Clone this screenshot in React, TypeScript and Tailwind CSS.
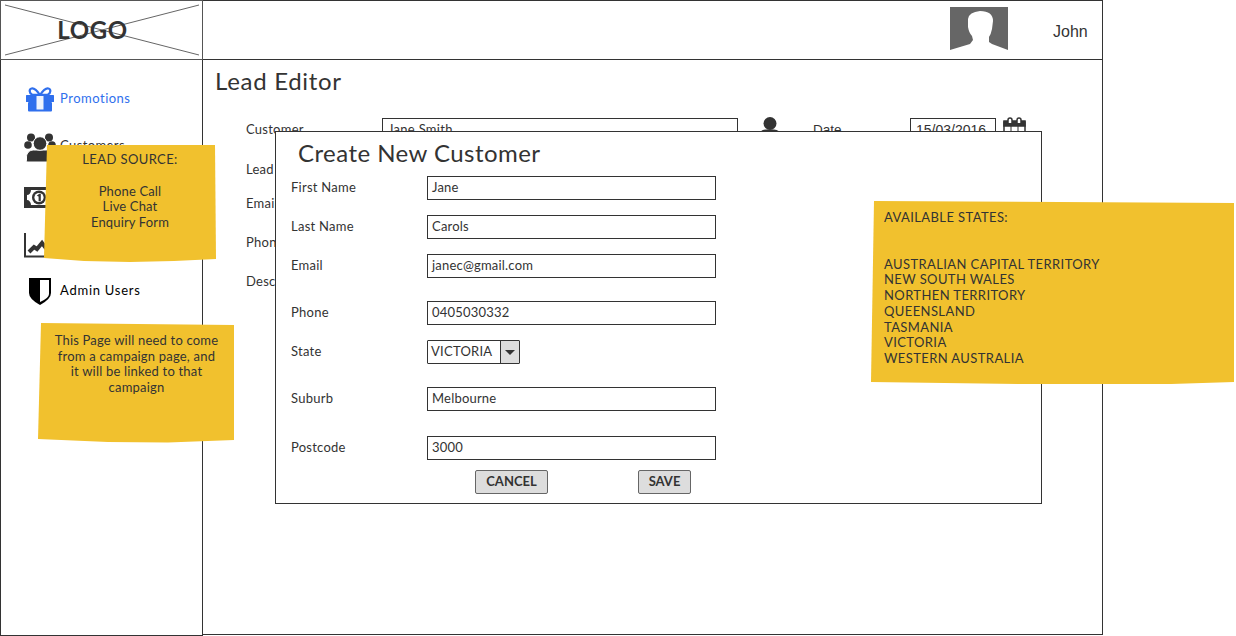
import type { ReactNode } from "react";

const font = "font-['Lato','Noto_Sans',sans-serif]";

function GiftIcon() {
  return (
    <svg width="28" height="25" viewBox="0 0 28 25" className="block">
      <path d="M14 8C10 2 7 1 5.500 1.500 3 2 3 6 6 7.500L14 8C18 2 21 1 22.500 1.500 25 2 25 6 22 7.500L14 8" fill="none" stroke="#2f6fed" strokeWidth="2.200" />
      <rect x="0" y="8" width="28" height="7" rx="0.500" fill="#2f6fed" />
      <rect x="2" y="15" width="24" height="9.500" rx="1" fill="#2f6fed" />
      <rect x="10.500" y="9" width="7" height="13.500" fill="#eef3fd" />
    </svg>
  );
}

function UsersIcon() {
  return (
    <svg width="32" height="30" viewBox="0 0 32 30" className="block" fill="#333333">
      <circle cx="7" cy="4.500" r="4" />
      <circle cx="25" cy="4.500" r="4" />
      <circle cx="4" cy="12" r="3.800" />
      <circle cx="28" cy="12" r="3.800" />
      <path d="M4 29c-1 0-1.500-.5-1.500-1.500V24c0-4 3-7 7-7h13c4 0 7 3 7 7v3.500c0 1-.5 1.500-1.500 1.500z" stroke="#ffffff" strokeWidth="1" />
      <circle cx="16" cy="10.500" r="6.800" stroke="#ffffff" strokeWidth="1" />
    </svg>
  );
}

function MoneyIcon() {
  return (
    <svg width="30" height="21" viewBox="0 0 30 21" className="block">
      <rect x="0" y="0" width="30" height="21" fill="#333333" />
      <path d="M7 3H27V18H7C7 15 5 13 3 13V8C5 8 7 6 7 3z" fill="#ffffff" />
      <circle cx="15" cy="10.500" r="7" fill="#333333" />
      <circle cx="15" cy="10.500" r="4.600" fill="#ffffff" />
      <path d="M12.800 8.800L15.300 6.800H16.800V14.200H14.600V9.500z" fill="#333333" />
    </svg>
  );
}

function ChartIcon() {
  return (
    <svg width="30" height="25" viewBox="0 0 30 25" className="block">
      <path d="M1 0V23.500H30" fill="none" stroke="#333333" strokeWidth="2" />
      <path d="M5 19L10 14 13 16 18 10 21 14 26 10" fill="none" stroke="#333333" strokeWidth="4" />
    </svg>
  );
}

function ShieldIcon() {
  return (
    <svg width="24" height="29" viewBox="0 0 24 29" className="block">
      <path d="M1 1H23V16Q23 22 12 28 1 22 1 16z" fill="#000000" />
      <path d="M12 3H21V17Q21 21 12 25z" fill="#ffffff" />
    </svg>
  );
}

function NavItem({ icon, label, className, iconClass }: { icon: ReactNode; label: string; className: string; iconClass: string }) {
  return (
    <div className={`flex h-[30px] items-center ${className}`}>
      <div className={`flex w-[59px] shrink-0 ${iconClass}`}>{icon}</div>
      <span className="text-[13px] leading-none">{label}</span>
    </div>
  );
}

function Field({ label, value, mt }: { label: string; value: string; mt: string }) {
  return (
    <div className={`flex h-6 items-center ${mt}`}>
      <span className="w-[136px] shrink-0 text-[13px] tracking-[0.25px] text-[#333333]">{label}</span>
      <div className="flex h-6 w-[289px] items-center border border-[#333333] px-1 text-[13px] tracking-[0.2px] text-[#333333]">{value}</div>
    </div>
  );
}

function BackLabel({ children, className }: { children: ReactNode; className: string }) {
  return <div className={`h-5 text-[13px] leading-5 tracking-[0.25px] text-[#333333] ${className}`}>{children}</div>;
}

export default function App() {
  return (
    <div className={`relative h-[636px] w-[1236px] overflow-hidden bg-white ${font}`}>
      <div className="flex h-[636px] w-[1103px] flex-col">
        {/* header */}
        <div className="flex h-[60px] shrink-0">
          <div className="h-[60px] w-[203px] shrink-0 border border-[#555555] bg-white p-px">
            <div className="relative h-full w-full">
              <svg width="199" height="56" viewBox="0 0 199 56" className="absolute inset-0">
                <path d="M3 3L197 53M197 3L3 53" stroke="#666666" strokeWidth="1" />
              </svg>
              <div className="absolute inset-0 flex items-center justify-center pr-[18px] text-[24px] font-bold tracking-[0.6px] text-[#333333]">LOGO</div>
            </div>
          </div>
          <div className="flex flex-1 items-center border-t border-r border-b border-[#333333] pl-[747px]">
            <svg width="58" height="47" viewBox="0 0 58 47" className="mt-px shrink-0">
              <rect width="58" height="47" fill="#666666" />
              <path d="M0 47V43L10 40 20 37 23 33 22 29Q19 26 18 20L18 12Q19 5 30 4 43 4 43 14L42 22Q41 27 39 30L39 35 42 37 50 40 58 43V47z" fill="#ffffff" />
            </svg>
            <span className="mt-[3px] ml-[45px] font-['Liberation_Sans',sans-serif] text-[16px] text-[#333333]">John</span>
          </div>
        </div>

        <div className="flex min-h-0 flex-1">
          {/* sidebar */}
          <div className="flex h-[576px] w-[203px] shrink-0 flex-col border-x border-b border-[#333333] pt-[23px]">
            <NavItem icon={<GiftIcon />} label="Promotions" className="tracking-[0.5px] text-[#2f6fed]" iconClass="pl-[25px] mt-[2px]" />
            <NavItem icon={<UsersIcon />} label="Customers" className="mt-[17px] tracking-[0.4px] text-[#333333]" iconClass="pl-[23px] mt-[5px]" />
            <NavItem icon={<MoneyIcon />} label="Sales" className="mt-[20px] tracking-[0.4px] text-[#333333]" iconClass="pl-[23px] mt-[5px]" />
            <NavItem icon={<ChartIcon />} label="Reports" className="mt-[20px] tracking-[0.4px] text-[#333333]" iconClass="pl-[23px]" />
            <NavItem icon={<ShieldIcon />} label="Admin Users" className="mt-[15px] tracking-[0.75px] text-black" iconClass="pl-[27px] mt-[2px]" />
          </div>

          {/* lead editor behind the dialog */}
          <div className="h-[575px] flex-1 border-r border-b border-[#333333] pt-[5px] pl-[12px]">
            <h1 className="text-[24px] leading-[32px] tracking-[0.7px] text-[#333333]">Lead Editor</h1>
            <div className="mt-[21px] flex h-6 items-center pl-[31px]">
              <span className="w-[136px] text-[13px] tracking-[0.25px] text-[#333333]">Customer</span>
              <div className="flex h-6 w-[356px] items-center border border-[#333333] px-[5px] text-[13px] tracking-[0.3px] text-[#333333]">Jane Smith</div>
              <svg width="20" height="24" viewBox="0 0 20 24" fill="#333333" className="mb-[3px] ml-[22px]">
                <circle cx="10" cy="6.500" r="6.500" />
                <path d="M0 24V17Q0 13 6 12.500H14Q20 13 20 17V24z" />
              </svg>
              <span className="ml-[33px] w-[97px] font-['Liberation_Sans',sans-serif] text-[13.500px] text-[#333333]">Date</span>
              <div className="flex h-6 w-[86px] items-center border border-[#333333] pl-[5px] font-['Liberation_Sans',sans-serif] text-[14px] text-[#333333]">15/03/2016</div>
              <svg width="23" height="24" viewBox="0 0 23 24" className="mb-[2px] ml-[7px]" fill="none" stroke="#333333" strokeWidth="1.500">
                <rect x="1" y="5" width="21" height="18" />
                <rect x="1" y="4" width="21" height="5" fill="#333333" />
                <path d="M8 9v14M15 9v14M1 15h21" strokeWidth="1" />
                <path d="M5 6V3a2 2 0 0 1 4 0v3M14 6V3a2 2 0 0 1 4 0v3" fill="#ffffff" strokeWidth="1.500" />
              </svg>
            </div>
            <div className="pl-[31px]">
              <BackLabel className="mt-[17px]">Lead</BackLabel>
              <BackLabel className="mt-[14px]">Email</BackLabel>
              <BackLabel className="mt-[19px]">Phone</BackLabel>
              <BackLabel className="mt-[19px]">Description</BackLabel>
            </div>
          </div>
        </div>
      </div>

      {/* dialog */}
      <div className="absolute top-[131px] left-[275px] h-[373px] w-[767px] border border-[#333333] bg-white pl-[15px]">
        <div className="h-[44px] pt-[5px] pl-[7px] text-[24px] leading-[32px] tracking-[0.45px] text-[#333333]">Create New Customer</div>
        <Field label="First Name" value="Jane" mt="" />
        <Field label="Last Name" value="Carols" mt="mt-[15px]" />
        <Field label="Email" value="janec@gmail.com" mt="mt-[15px]" />
        <Field label="Phone" value="0405030332" mt="mt-[23px]" />
        <div className="mt-[15px] flex h-6 items-center">
          <span className="w-[136px] shrink-0 text-[13px] tracking-[0.25px] text-[#333333]">State</span>
          <div className="flex h-6 w-[93px] items-stretch rounded-[1px] border border-[#333333] text-[13px] text-[#333333]">
            <div className="flex flex-1 items-center pl-[3px] tracking-[0.25px]">VICTORIA</div>
            <div className="flex w-[19px] items-center justify-center border-l border-[#333333] bg-[#dddddd]">
              <div className="h-0 w-0 border-x-[5px] border-t-[5px] border-x-transparent border-t-[#333333]" />
            </div>
          </div>
        </div>
        <Field label="Suburb" value="Melbourne" mt="mt-[23px]" />
        <Field label="Postcode" value="3000" mt="mt-[25px]" />
        <div className="mt-[10px] flex pl-[184px]">
          <div className="flex h-6 w-[73px] items-center justify-center rounded-[2px] border border-[#666666] bg-[#dddddd] text-[13px] font-bold text-[#333333]">CANCEL</div>
          <div className="ml-[90px] flex h-6 w-[53px] items-center justify-center rounded-[2px] border border-[#666666] bg-[#dddddd] text-[13px] font-bold text-[#333333]">SAVE</div>
        </div>
      </div>

      {/* sticky notes */}
      <div className="absolute top-[145px] left-[44px] h-[117px] w-[172px] bg-[#f1c12e] pt-[7px] text-center text-[13px] leading-[15.500px] text-[#333333] [clip-path:polygon(3px_0,171px_0,172px_114px,130px_116px,86px_117px,40px_116px,0_113px)]">
        <p className="tracking-[0.4px]">LEAD SOURCE:</p>
        <p className="mt-[16px] tracking-[0.15px]">Phone Call</p>
        <p className="tracking-[0.15px]">Live Chat</p>
        <p className="tracking-[0.15px]">Enquiry Form</p>
      </div>
      <div className="absolute top-[323px] left-[38px] h-[120px] w-[197px] bg-[#f1c12e] px-[15px] pt-[10px] text-center text-[13px] leading-[15.500px] tracking-[0.2px] text-[#333333] [clip-path:polygon(3px_0,196px_2px,196px_117px,130px_119.500px,70px_119px,0_116px)]">
        This Page will need to come from a campaign page, and it will be linked to that campaign
      </div>
      <div className="absolute top-[201px] left-[871px] h-[184px] w-[364px] bg-[#f1c12e] pt-[9px] pl-[13px] text-[13px] leading-[15.700px] tracking-[0.4px] text-[#333333] [clip-path:polygon(3px_0,363px_2px,363px_181px,300px_183px,150px_183px,0_181px)]">
        <p>AVAILABLE STATES:</p>
        <p className="mt-[31px]">AUSTRALIAN CAPITAL TERRITORY</p>
        <p>NEW SOUTH WALES</p>
        <p>NORTHEN TERRITORY</p>
        <p>QUEENSLAND</p>
        <p>TASMANIA</p>
        <p>VICTORIA</p>
        <p>WESTERN AUSTRALIA</p>
      </div>
    </div>
  );
}
